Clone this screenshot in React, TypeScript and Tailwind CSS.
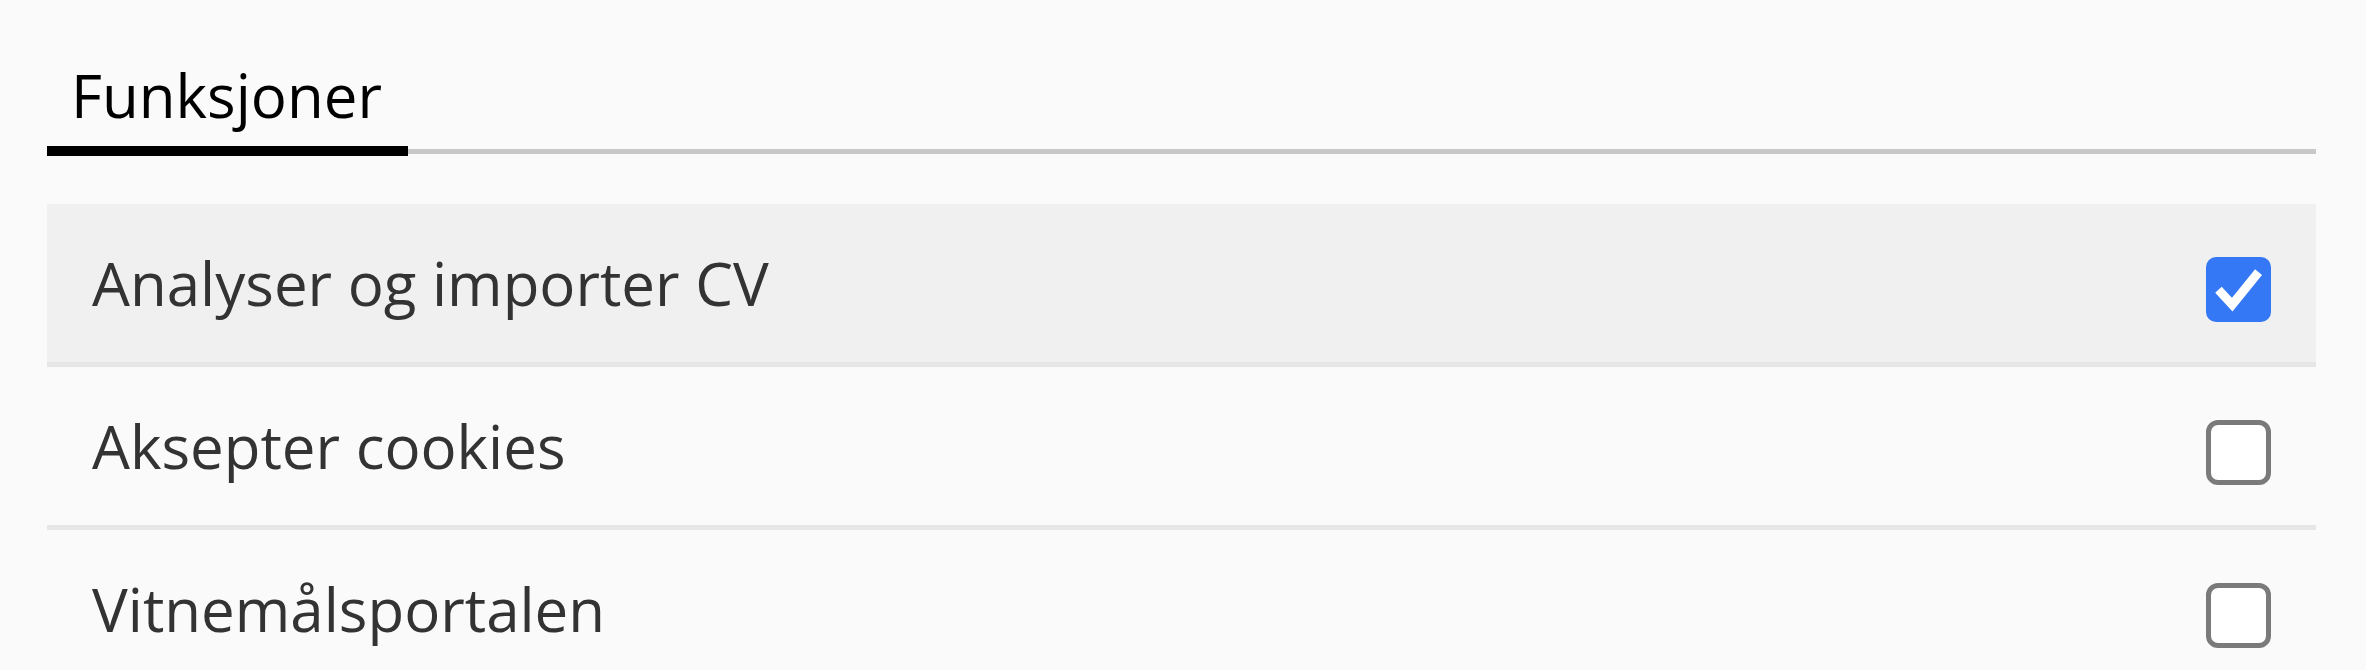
import { useState } from 'react';

type Feature = {
  id: string;
  label: string;
  enabled: boolean;
};

const initialFeatures: Feature[] = [
  { id: 'cv', label: 'Analyser og importer CV', enabled: true },
  { id: 'cookies', label: 'Aksepter cookies', enabled: false },
  { id: 'vitnemal', label: 'Vitnemålsportalen', enabled: false },
];

function Checkbox({ checked, onChange }: { checked: boolean; onChange: () => void }) {
  if (checked) {
    return (
      <button
        type="button"
        onClick={onChange}
        className="mt-[13px] flex h-[65px] w-[65px] shrink-0 items-center justify-center rounded-[10px] bg-[#3478f6]"
      >
        <svg viewBox="0 0 24 24" className="h-[65px] w-[65px]" fill="none">
          <polyline points="4.6,12.1 9.7,17.6 19.4,5.6" stroke="#ffffff" strokeWidth="3.3" strokeLinecap="butt" strokeLinejoin="miter" />
        </svg>
      </button>
    );
  }

  return (
    <button
      type="button"
      onClick={onChange}
      className="mt-[13px] h-[65px] w-[65px] shrink-0 rounded-[12px] border-[5px] border-[#7a7a7a] bg-white"
    />
  );
}

export default function App() {
  const [features, setFeatures] = useState(initialFeatures);

  const toggle = (id: string) => {
    setFeatures((prev) => prev.map((f) => (f.id === id ? { ...f, enabled: !f.enabled } : f)));
  };

  return (
    <div
      className="min-h-[670px] bg-[#fafafa] pt-[54px] pl-[47px] pr-[50px]"
      style={{ fontFamily: '"Open Sans", "Noto Sans", sans-serif' }}
    >
      <div className="flex items-end">
        <button
          type="button"
          className="w-[361px] border-b-[10px] border-black pb-[9px] pl-[24px] text-left text-[60px] leading-[83px] text-black"
        >
          Funksjoner
        </button>
        <div className="mb-[2px] flex-1 border-b-[5px] border-[#c8c8c8]" />
      </div>

      <div className="mt-[48px] flex flex-col">
        {features.map((f, i) => (
          <div
            key={f.id}
            className={
              i === 0
                ? 'flex h-[163px] items-center justify-between border-b-[5px] border-[#e6e6e6] bg-[#f0f0f0] pl-[45px] pr-[45px]'
                : 'flex h-[163px] items-center justify-between border-b-[5px] border-[#e6e6e6] pl-[45px] pr-[45px]'
            }
          >
            <span className="text-[60px] leading-[83px] text-[#333333]">{f.label}</span>
            <Checkbox checked={f.enabled} onChange={() => toggle(f.id)} />
          </div>
        ))}
      </div>
    </div>
  );
}
